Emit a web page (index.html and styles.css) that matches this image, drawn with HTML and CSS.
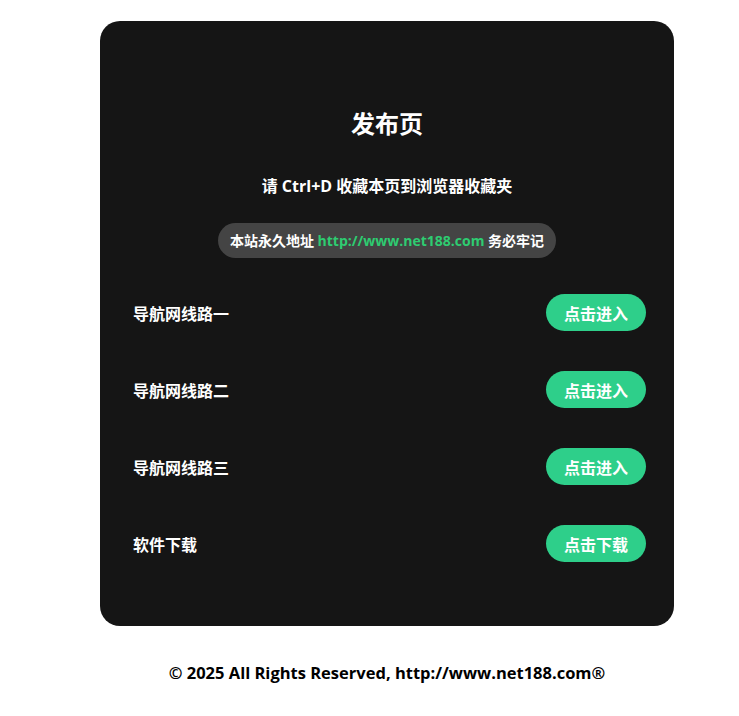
FILE: index.html
```html
<!DOCTYPE html>
<html lang="zh-CN">
<head>
<meta charset="utf-8">
<title>发布页</title>
<link rel="stylesheet" href="styles.css">
</head>
<body>
<div class="page">
  <div class="card">
    <h1 class="title">发布页</h1>
    <p class="subtitle">请 Ctrl+D 收藏本页到浏览器收藏夹</p>
    <div class="pill-wrap">
      <div class="pill">本站永久地址 <span class="link">http://www.net188.com</span> 务必牢记</div>
    </div>
    <div class="rows">
      <div class="row"><span class="label">导航网线路一</span><a class="btn">点击进入</a></div>
      <div class="row"><span class="label">导航网线路二</span><a class="btn">点击进入</a></div>
      <div class="row"><span class="label">导航网线路三</span><a class="btn">点击进入</a></div>
      <div class="row"><span class="label">软件下载</span><a class="btn">点击下载</a></div>
    </div>
  </div>
  <p class="footer">© 2025 All Rights Reserved, http://www.net188.com®</p>
</div>
</body>
</html>
```
FILE: styles.css
```css
html, body {
  margin: 0;
  padding: 0;
  background: #ffffff;
}
body {
  font-family: "Open Sans", "Noto Sans CJK SC", sans-serif;
  font-weight: 700;
}
.page {
  width: 574px;
  margin-left: 100px;
  padding-top: 21px;
}
.card {
  background: #151515;
  border-radius: 20px;
  height: 605px;
  box-sizing: border-box;
  padding: 87px 28px 0 33px;
  color: #ffffff;
}
.title {
  margin: 0;
  text-align: center;
  font-size: 24px;
  line-height: 32px;
  font-weight: 700;
  margin-left: -5px;
}
.subtitle {
  margin: 35px 0 0 -5px;
  text-align: center;
  font-size: 16px;
  line-height: 22px;
}
.pill-wrap {
  display: flex;
  justify-content: center;
  margin: 26px 0 0 -5px;
}
.pill {
  background: #444444;
  border-radius: 18px;
  height: 35px;
  line-height: 35px;
  padding: 0 12px;
  font-size: 14px;
}
.link {
  color: #2ecc71;
}
.rows {
  margin-top: 36px;
  display: flex;
  flex-direction: column;
  gap: 40px;
}
.row {
  display: flex;
  align-items: center;
  justify-content: space-between;
  height: 37px;
}
.label {
  font-size: 16px;
}
.btn {
  display: flex;
  align-items: center;
  justify-content: center;
  width: 100px;
  height: 37px;
  border-radius: 19px;
  background: #2ecf8a;
  color: #ffffff;
  font-size: 16px;
}
.footer {
  margin: 36px 0 0;
  text-align: center;
  color: #000000;
  font-size: 16.5px;
  line-height: 22px;
}
```
